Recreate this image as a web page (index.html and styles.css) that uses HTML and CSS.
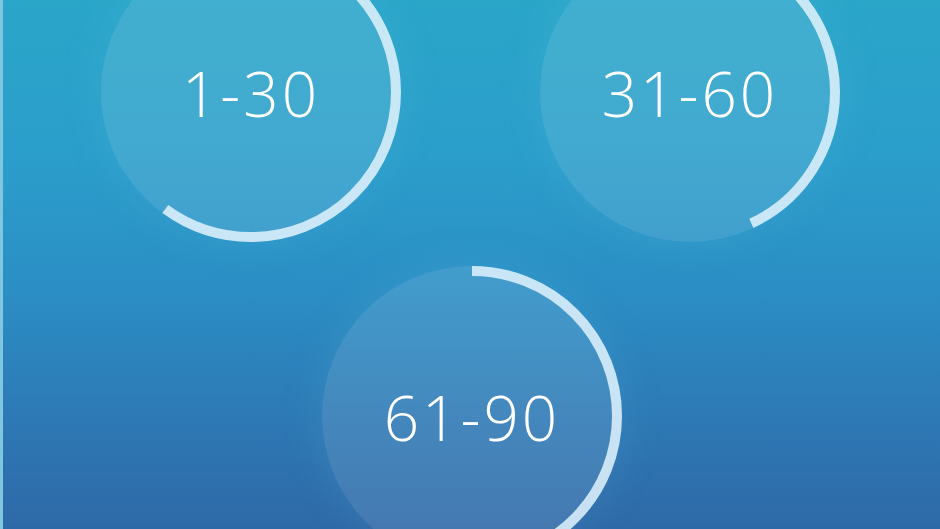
FILE: index.html
```html
<!DOCTYPE html>
<html>
<head>
<meta charset="utf-8">
<link rel="stylesheet" href="styles.css">
</head>
<body>
<main class="screen">
  <div class="rows">
    <div class="row row-top">
      <div class="ring">
        <svg class="arc" viewBox="0 0 300 300">
          <circle class="arc-path" cx="150" cy="150" r="145" stroke-dasharray="547 1000"></circle>
        </svg>
        <span class="label">1-30</span>
      </div>
      <div class="ring">
        <svg class="arc" viewBox="0 0 300 300">
          <circle class="arc-path" cx="150" cy="150" r="145" stroke-dasharray="392 1000"></circle>
        </svg>
        <span class="label">31-60</span>
      </div>
    </div>
    <div class="row row-bottom">
      <div class="ring">
        <svg class="arc" viewBox="0 0 300 300">
          <circle class="arc-path" cx="150" cy="150" r="145" stroke-dasharray="520 1000"></circle>
        </svg>
        <span class="label">61-90</span>
      </div>
    </div>
  </div>
</main>
</body>
</html>
```

FILE: styles.css
```css
html, body {
  margin: 0;
  padding: 0;
  width: 940px;
  height: 529px;
  overflow: hidden;
}

.screen {
  width: 940px;
  height: 529px;
  box-sizing: border-box;
  overflow: hidden;
  border-left: 3px solid #7fc6e0;
  background: linear-gradient(180deg, #2aa6c9 0%, #2b9ecb 30%, #2b8ec4 55%, #2d7ab6 78%, #2e69a7 100%);
  font-family: "Open Sans", "Noto Sans", sans-serif;
  color: #fff;
}

.rows {
  display: flex;
  flex-direction: column;
  margin-top: -58px;
}

.row {
  display: flex;
}

.row-top {
  padding-left: 98px;
  gap: 139px;
}

.row-bottom {
  padding-left: 319px;
  margin-top: 24px;
}

.ring {
  position: relative;
  width: 300px;
  height: 300px;
  border-radius: 50%;
  background: rgba(255, 255, 255, 0.11);
  box-shadow: 0 0 36px 8px rgba(120, 210, 240, 0.10);
  display: flex;
  align-items: center;
  justify-content: center;
}

.arc {
  position: absolute;
  inset: 0;
  width: 300px;
  height: 300px;
  transform: rotate(-90deg);
}

.arc-path {
  fill: none;
  stroke: rgba(220, 240, 252, 0.88);
  stroke-width: 10;
}

.label {
  font-size: 62px;
  font-weight: 300;
  letter-spacing: 3px;
  line-height: 1;
  margin-top: 2px;
}
```
